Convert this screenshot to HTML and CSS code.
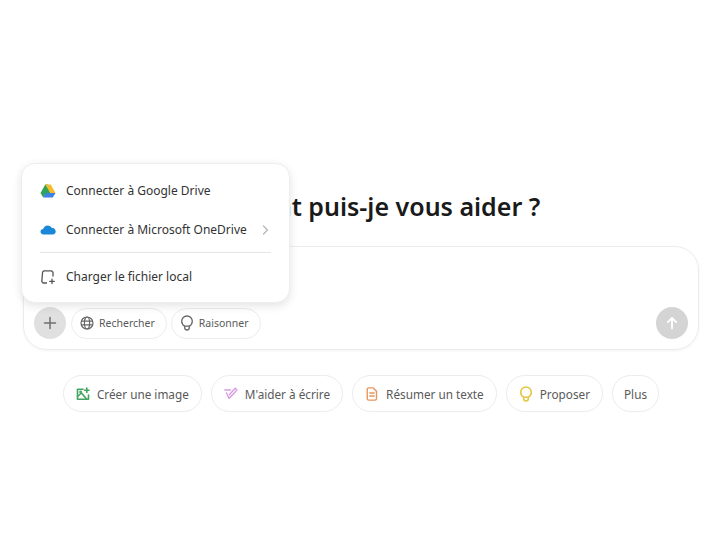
FILE: index.html
```html
<!DOCTYPE html>
<html lang="fr">
<head>
  <meta charset="UTF-8" />
  <title>Assistant</title>
  <link rel="stylesheet" href="styles.css">
</head>
<body>
  <div class="page">
    <h1>Comment puis-je vous aider ?</h1>

    <div class="composer">
      <div class="tools">
        <button class="plus">
          <svg width="14" height="14" viewBox="0 0 14 14"><path d="M7 1.500v11M1.500 7h11" stroke="#6f6f6f" stroke-width="1.500" stroke-linecap="round"/></svg>
        </button>
        <span class="tool">
          <svg width="14" height="14" viewBox="0 0 14 14" fill="none" stroke="#666" stroke-width="1.200"><circle cx="7" cy="7" r="6"/><ellipse cx="7" cy="7" rx="2.600" ry="6"/><path d="M1 5.200h12M1 8.800h12"/></svg>
          Rechercher
        </span>
        <span class="tool">
          <svg width="14" height="16" viewBox="0 0 14 16" fill="none" stroke="#666" stroke-width="1.300" stroke-linecap="round" stroke-linejoin="round"><path d="M4.700 11.200C3 10.200 1.700 8.500 1.700 6.300a5.300 5.300 0 0 1 10.600 0c0 2.200-1.300 3.900-3 4.900z"/><path d="M4.700 11.200v1.300c0 1.500 1 2.500 2.300 2.500s2.300-1 2.300-2.500v-1.300"/></svg>
          Raisonner
        </span>
        <span class="send">
          <svg width="14" height="14" viewBox="0 0 14 14" fill="none" stroke="#fff" stroke-width="1.800" stroke-linecap="round" stroke-linejoin="round"><path d="M7 12.500V2M2.800 6.200 7 2l4.200 4.200"/></svg>
        </span>
      </div>
    </div>

    <div class="chips">
      <span class="chip">
        <svg width="14" height="14" viewBox="0 0 14 14" fill="none" stroke="#3fa45f" stroke-width="1.600" stroke-linecap="round" stroke-linejoin="round"><path d="M7 2.200H1.500v10H12.500V8"/><path d="M1.500 9.500 5.500 6l5 6"/><path d="M10.800 1v4.400M8.600 3.200H13"/><circle cx="4.600" cy="5" r=".6"/></svg>
        Créer une image
      </span>
      <span class="chip">
        <svg width="14" height="14" viewBox="0 0 14 14" fill="none" stroke="#d99ae3" stroke-width="1.300" stroke-linecap="round" stroke-linejoin="round"><path d="M.8 3h5.700"/><path d="M2.400 5.800 5 11.500l8-8.500-1.800-1.800L5.400 7.800"/></svg>
        M'aider à écrire
      </span>
      <span class="chip">
        <svg width="14" height="14" viewBox="0 0 14 14" fill="none" stroke="#e8955a" stroke-width="1.400" stroke-linecap="round" stroke-linejoin="round"><path d="M3.800.9h4.400l3.300 3.300v7.300a1.600 1.600 0 0 1-1.600 1.600H3.800a1.600 1.600 0 0 1-1.600-1.600V2.500A1.600 1.600 0 0 1 3.800.9z"/><path d="M4.800 6h4.400M4.800 9h4.400"/></svg>
        Résumer un texte
      </span>
      <span class="chip">
        <svg width="14" height="16" viewBox="0 0 14 16" fill="none" stroke="#e3c53e" stroke-width="1.500" stroke-linecap="round" stroke-linejoin="round"><path d="M4.700 11.200C3 10.200 1.700 8.500 1.700 6.300a5.300 5.300 0 0 1 10.600 0c0 2.200-1.300 3.900-3 4.900z"/><path d="M4.700 11.200v1.300c0 1.500 1 2.500 2.300 2.500s2.300-1 2.300-2.500v-1.300"/></svg>
        Proposer
      </span>
      <span class="chip">Plus</span>
    </div>

    <div class="menu">
      <div class="menu-item">
        <svg width="16" height="14" viewBox="0 0 16 14"><path d="M5.300.5H8L10.200 9h-4L3.200 13.500.5 9z" fill="#2fa35a"/><path d="M5.300.5h5.400L15.500 9h-5.300z" fill="#f5bd2e"/><path d="M5.800 9h9.700l-2.700 4.500H3.200z" fill="#3f7fe8"/></svg>
        <span>Connecter à Google Drive</span>
      </div>
      <div class="menu-item">
        <svg width="16" height="14" viewBox="0 0 16 14"><path d="M3.700 11.500C1.800 11.500.5 10.300.5 8.800c0-1.500 1.100-2.600 2.600-2.700C3.700 4 5.500 2.500 7.600 2.500c1.700 0 3.100.9 3.900 2.300 2.300-.1 4.200 1.600 4.200 3.600 0 1.800-1.400 3.100-3.200 3.100z" fill="#1b87d8"/></svg>
        <span>Connecter à Microsoft OneDrive</span>
        <svg class="chev" width="7" height="10" viewBox="0 0 7 10" fill="none" stroke="#b4b4b4" stroke-width="1.200" stroke-linecap="round" stroke-linejoin="round"><path d="M1.500 1 5.500 5l-4 4"/></svg>
      </div>
      <hr>
      <div class="menu-item">
        <svg width="16" height="16" viewBox="0 0 16 16" fill="none" stroke="#555" stroke-width="1.300" stroke-linecap="round" stroke-linejoin="round"><path d="M6.500 14H3.200L1.800 12.600 2.600 3 4 1.800h7.500L13 3.200V7"/><path d="M12 10.200v4.400M9.800 12.400h4.400"/></svg>
        <span>Charger le fichier local</span>
      </div>
    </div>
  </div>
</body>
</html>
```

FILE: styles.css
```css
:root {
  --text: #1f1f1f;
  --muted: #5a5a5a;
  --border: #ececec;
}

body {
  margin: 0;
  background: #fff;
  font-family: "Noto Sans", "Open Sans", sans-serif;
  color: var(--text);
}

.page {
  position: relative;
  height: 553px;
  box-sizing: border-box;
  padding: 187px 21px 0 23px;
  overflow: hidden;
}

h1 {
  margin: 0 0 21px;
  height: 38px;
  font-size: 25px;
  line-height: 38px;
  font-weight: 600;
  text-align: center;
  color: #1a1a1a;
}

.composer {
  box-sizing: border-box;
  height: 104px;
  border: 1px solid var(--border);
  border-radius: 24px;
  padding: 60px 10px 0;
  box-shadow: 0 1px 3px rgba(0, 0, 0, 0.05);
}

.tools {
  display: flex;
  align-items: center;
  gap: 4px;
}

.plus {
  width: 32px;
  height: 32px;
  margin-right: 1px;
  padding: 0;
  border: 0;
  border-radius: 50%;
  background: #e0e0e0;
  display: flex;
  align-items: center;
  justify-content: center;
}

.tool {
  box-sizing: border-box;
  height: 31px;
  padding: 0 11px 0 8px;
  display: flex;
  align-items: center;
  gap: 5px;
  border: 1px solid var(--border);
  border-radius: 16px;
  font-size: 10.500px;
  color: var(--muted);
}

.send {
  margin-left: auto;
  width: 32px;
  height: 32px;
  border-radius: 50%;
  background: #d4d4d4;
  display: flex;
  align-items: center;
  justify-content: center;
}

.chips {
  margin-top: 25px;
  display: flex;
  justify-content: center;
  gap: 9px;
}

.chip {
  box-sizing: border-box;
  height: 37px;
  padding: 0 12px;
  display: flex;
  align-items: center;
  gap: 7px;
  border: 1px solid var(--border);
  border-radius: 19px;
  font-size: 11.750px;
  color: var(--muted);
}

.chip:last-child {
  padding: 0 11px;
}

.menu {
  position: absolute;
  left: 21px;
  top: 163px;
  box-sizing: border-box;
  width: 269px;
  height: 140px;
  padding: 7px 18px 0 18px;
  background: #fff;
  border: 1px solid #eeeeee;
  border-radius: 14px;
  box-shadow: 0 3px 10px rgba(0, 0, 0, 0.11);
}

.menu-item {
  height: 39px;
  display: flex;
  align-items: center;
  gap: 10px;
  font-size: 12px;
  color: #333;
}

.chev {
  margin-left: auto;
  margin-right: 2px;
}

.menu hr {
  margin: 3px 0 4px;
  border: 0;
  border-top: 1px solid #e6e6e6;
}
```
